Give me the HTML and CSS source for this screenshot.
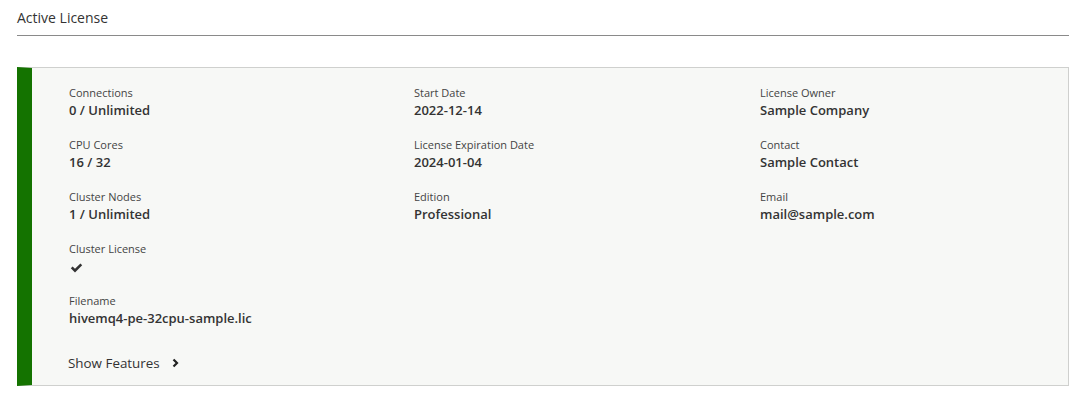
FILE: index.html
```html
<!DOCTYPE html>
<html lang="en">
<head>
    <meta charset="UTF-8">
    <title>Active License</title>
    <link rel="stylesheet" href="styles.css">
</head>
<body>
<div class="page">
    <div class="section-title">Active License</div>

    <div class="license-card">
        <div class="license-grid">
            <div class="col">
                <div class="field">
                    <div class="label">Connections</div>
                    <div class="value">0 / Unlimited</div>
                </div>
                <div class="field">
                    <div class="label">CPU Cores</div>
                    <div class="value">16 / 32</div>
                </div>
                <div class="field">
                    <div class="label">Cluster Nodes</div>
                    <div class="value">1 / Unlimited</div>
                </div>
                <div class="field">
                    <div class="label">Cluster License</div>
                    <div class="value">
                        <svg class="check" width="13" height="10" viewBox="0 0 13 10">
                            <path d="M0.8 5.2 L2.6 3.4 L5 5.8 L10.4 0.4 L12.2 2.2 L5 9.4 Z" fill="#333"/>
                        </svg>
                    </div>
                </div>
                <div class="field">
                    <div class="label">Filename</div>
                    <div class="value">hivemq4-pe-32cpu-sample.lic</div>
                </div>
            </div>
            <div class="col">
                <div class="field">
                    <div class="label">Start Date</div>
                    <div class="value">2022-12-14</div>
                </div>
                <div class="field">
                    <div class="label">License Expiration Date</div>
                    <div class="value">2024-01-04</div>
                </div>
                <div class="field">
                    <div class="label">Edition</div>
                    <div class="value">Professional</div>
                </div>
            </div>
            <div class="col">
                <div class="field">
                    <div class="label">License Owner</div>
                    <div class="value">Sample Company</div>
                </div>
                <div class="field">
                    <div class="label">Contact</div>
                    <div class="value">Sample Contact</div>
                </div>
                <div class="field">
                    <div class="label">Email</div>
                    <div class="value">mail@sample.com</div>
                </div>
            </div>
        </div>

        <a class="show-features" href="#">
            Show Features
            <svg width="8" height="10" viewBox="0 0 8 10">
                <path d="M1.5 1.5 L5 5 L1.5 8.5" fill="none" stroke="#222" stroke-width="2.2"/>
            </svg>
        </a>
    </div>
</div>
</body>
</html>
```

FILE: styles.css
```css
* {
    margin: 0;
    padding: 0;
    box-sizing: border-box;
}

a {
    text-decoration: none;
    color: #333;
}

body {
    font-family: "Open Sans", "Liberation Sans", sans-serif;
    color: #333;
    background: #fff;
}

.page {
    padding: 0 17px;
}

.section-title {
    font-size: 14px;
    line-height: 20px;
    padding-top: 8px;
    height: 36px;
    border-bottom: 1px solid #8a8a8a;
    color: #333;
}

.license-card {
    margin-top: 31px;
    background: #f7f8f6;
    border: 1px solid #cfd0ce;
    border-left: 15px solid #147300;
    padding: 17px 20px 12px 37px;
}

.license-grid {
    display: grid;
    grid-template-columns: 345px 346px 1fr;
}

.field {
    margin-bottom: 18px;
}

.label {
    font-size: 11px;
    line-height: 16px;
    color: #444;
}

.value {
    font-size: 13px;
    line-height: 18px;
    font-weight: 600;
    color: #333;
    height: 18px;
    display: flex;
    align-items: center;
}

.check {
    margin-left: 1px;
    margin-top: 4px;
}

.show-features {
    display: inline-flex;
    align-items: center;
    gap: 12px;
    margin-top: 8px;
    font-size: 13.4px;
    line-height: 20px;
    color: #333;
    margin-left: -1px;
}
```
